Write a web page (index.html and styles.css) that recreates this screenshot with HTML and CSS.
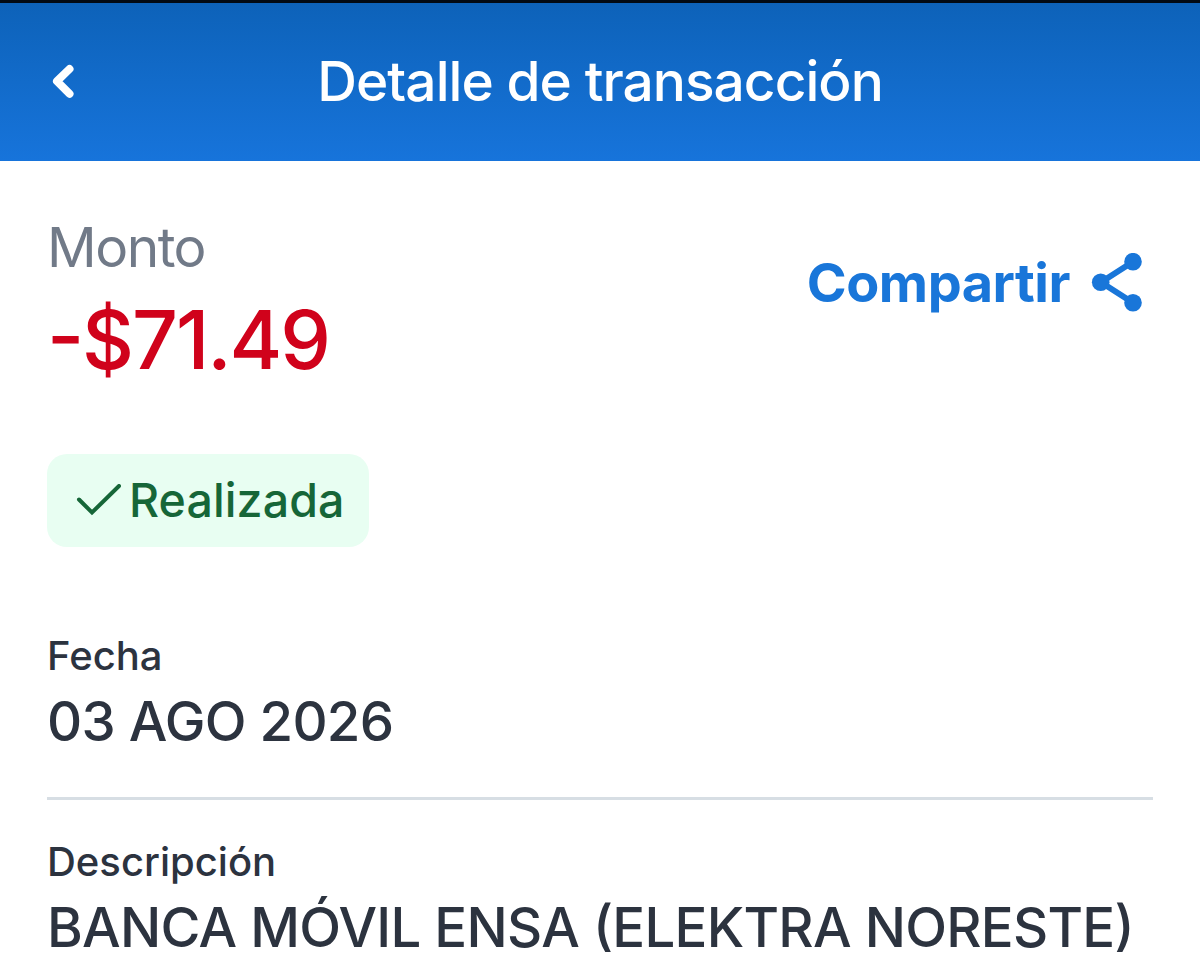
FILE: index.html
```html
<!DOCTYPE html>
<html lang="es">
<head>
    <meta charset="UTF-8">
    <meta name="viewport" content="width=device-width, initial-scale=1.0">
    <title>Detalle de transacción</title>
    <link rel="stylesheet" href="styles.css">
</head>
<body>

    <!-- Header -->
    <header class="header">
        <button class="back-btn" aria-label="Volver">
            <svg width="26" height="36" viewBox="0 0 26 36">
                <path d="M19.5 5 L7 17.2 L19.5 29.8" fill="none" stroke="#fff" stroke-width="8" stroke-linecap="round" stroke-linejoin="round"/>
            </svg>
        </button>
        <h1 class="title">Detalle de transacción</h1>
    </header>

    <main class="content">
        <div class="summary">
            <div class="amount">
                <div class="amount-label">Monto</div>
                <div class="amount-value">-$71.49</div>
            </div>
            <button class="share-btn">
                <span class="share-text">Compartir</span>
                <svg class="share-icon" width="52" height="60" viewBox="0 0 52 60">
                    <path d="M42 8.7 L10 29.3 L42 49.7" fill="none" stroke="#1976d9" stroke-width="6"/>
                    <circle cx="42" cy="8.7" r="8.8" fill="#1976d9"/>
                    <circle cx="9.7" cy="29.3" r="8.8" fill="#1976d9"/>
                    <circle cx="42" cy="49.7" r="8.8" fill="#1976d9"/>
                </svg>
            </button>
        </div>

        <div class="status">
            <svg width="46" height="34" viewBox="0 0 46 34">
                <path d="M4 15.5 L17 28.5 L44 2" fill="none" stroke="#166638" stroke-width="4" stroke-linecap="round"/>
            </svg>
            <span class="status-text">Realizada</span>
        </div>

        <!-- Transaction details -->
        <div class="detail">
            <div class="detail-label">Fecha</div>
            <div class="detail-value">03 AGO 2026</div>
        </div>
        <div class="detail">
            <div class="detail-label">Descripción</div>
            <div class="detail-value">BANCA MÓVIL ENSA (ELEKTRA NORESTE)</div>
        </div>
    </main>

</body>
</html>
```

FILE: styles.css
```css
body {
    font-family: Inter, sans-serif;
    font-feature-settings: "calt" 1;
    margin: 0;
    height: 967px;
    overflow: hidden;
    background-color: #fff;
    color: #2c333f;
}

button {
    border: 0;
    padding: 0;
    background: none;
    font: inherit;
    cursor: pointer;
}

/* Header */
.header {
    display: grid;
    grid-template-columns: 100px 1fr 100px;
    align-items: center;
    box-sizing: border-box;
    height: 161px;
    border-top: 3px solid #020a14;
    background: linear-gradient(#0d62b9, #1774db);
}

.back-btn {
    display: flex;
    margin-left: 50px;
}

.title {
    margin: 0;
    padding-bottom: 2px;
    text-align: center;
    font-size: 55px;
    font-weight: 500;
    line-height: 64px;
    letter-spacing: -0.95px;
    color: #fff;
    white-space: nowrap;
}

.content {
    padding: 54px 47px 0;
}

/* Amount and share button */
.summary {
    display: flex;
    justify-content: space-between;
    height: 239px;
}

.amount-label {
    font-size: 55px;
    line-height: 64px;
    letter-spacing: -1.5px;
    color: #717a88;
}

.amount-value {
    font-size: 80.5px;
    font-weight: 500;
    line-height: 122px;
    letter-spacing: -2.1px;
    color: #d0021b;
}

.share-btn {
    display: flex;
    align-items: center;
    gap: 21px;
    height: 136px;
    margin-right: 10px;
    color: #1976d9;
}

.share-text {
    padding-bottom: 2px;
    font-size: 54px;
    font-weight: 700;
    letter-spacing: -0.5px;
}

/* Status badge */
.status {
    display: flex;
    align-items: center;
    box-sizing: border-box;
    width: 322px;
    height: 93px;
    padding-left: 28px;
    gap: 8px;
    border-radius: 20px;
    background-color: #e8fef2;
}

.status-text {
    padding-bottom: 2px;
    font-size: 46.5px;
    font-weight: 500;
    letter-spacing: 0.1px;
    color: #166638;
}

/* Detail rows */
.detail {
    height: 165px;
    padding-top: 38px;
    white-space: nowrap;
}

.status + .detail {
    padding-top: 85px;
    border-bottom: 3px solid #d7dee4;
}

.detail-label {
    font-size: 40px;
    font-weight: 500;
    line-height: 48px;
}

.detail-value {
    font-size: 54.5px;
    font-weight: 500;
    line-height: 83px;
    letter-spacing: -0.72px;
}
```
